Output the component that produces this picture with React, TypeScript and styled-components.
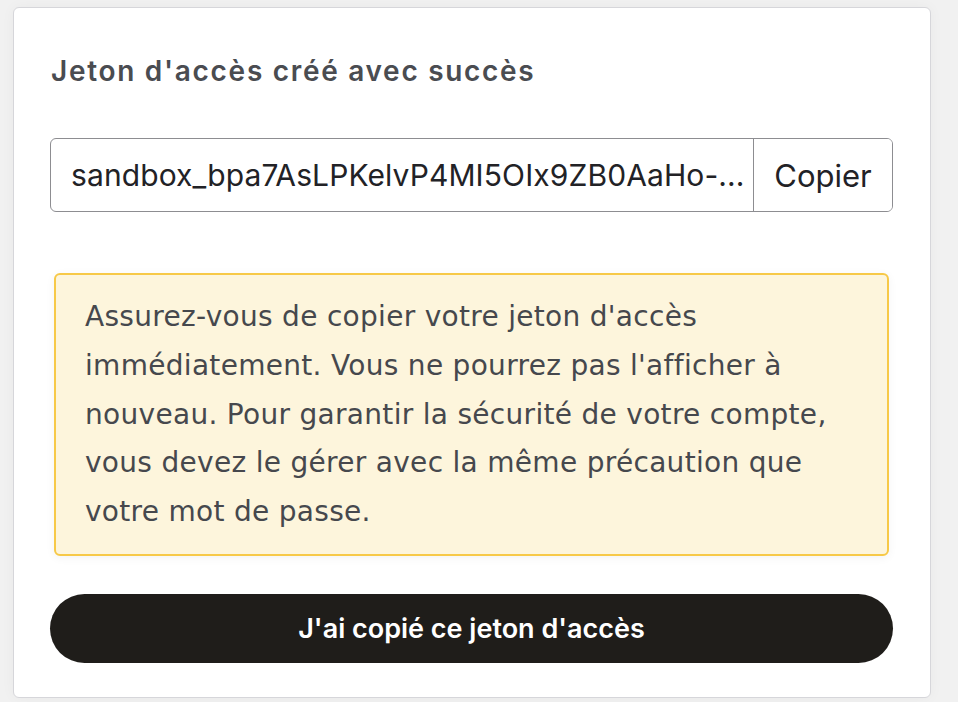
import React from "react";
import styled, { createGlobalStyle } from "styled-components";

const GlobalStyle = createGlobalStyle`
  html, body { margin: 0; padding: 0; background: #f1f1f1; }
  body { font-family: Inter, "Noto Sans", sans-serif; }
`;

const Page = styled.div`
  padding: 7px 27px 4px 13px;
  min-height: 702px;
  box-sizing: border-box;
`;

const Card = styled.div`
  box-sizing: border-box;
  width: 918px;
  height: 691px;
  background: #ffffff;
  border: 1px solid #d6d6da;
  border-radius: 6px;
  box-shadow: 0 0 14px rgba(0, 0, 0, 0.04);
  padding: 45px 37px 0 36px;
  display: flex;
  flex-direction: column;
`;

const Title = styled.h2`
  margin: 0 0 0 1px;
  font-family: Inter, sans-serif;
  font-weight: 600;
  font-size: 28px;
  line-height: 36px;
  color: #4a4c51;
  letter-spacing: 1.7px;
`;

const TokenGroup = styled.div`
  margin-top: 49px;
  display: flex;
  height: 74px;
  box-sizing: border-box;
  border: 1px solid #8d8d91;
  border-radius: 6px;
  overflow: hidden;
`;

const TokenInput = styled.div`
  flex: 1;
  min-width: 0;
  display: block;
  padding: 0 6px 0 20px;
  font-family: Inter, sans-serif;
  font-size: 30px;
  letter-spacing: 0.1px;
  color: #222226;
  white-space: nowrap;
  overflow: hidden;
  text-overflow: ellipsis;
  line-height: 72px;
`;

const CopyButton = styled.button`
  flex: 0 0 139px;
  border: none;
  border-left: 1px solid #8d8d91;
  background: #ffffff;
  font-family: Inter, sans-serif;
  font-size: 31px;
  color: #222226;
  padding: 0;
  cursor: pointer;
`;

const Warning = styled.div`
  margin: 61px 4px 0 4px;
  box-sizing: border-box;
  background: #fdf5dc;
  border: 2px solid #f7c948;
  border-radius: 6px;
  box-shadow: 0 2px 10px rgba(0, 0, 0, 0.05);
  padding: 18px 29px 17px 29px;
  font-family: "DejaVu Sans", sans-serif;
  font-size: 28px;
  line-height: 48.75px;
  color: #46484d;
  letter-spacing: 0.3px;
  white-space: nowrap;
`;

const ConfirmButton = styled.button`
  margin-top: 38px;
  height: 69px;
  border: none;
  border-radius: 35px;
  background: #1f1d1a;
  color: #ffffff;
  font-family: Inter, sans-serif;
  font-weight: 600;
  font-size: 27px;
  letter-spacing: 0px;
  cursor: pointer;
`;

export default function App() {
  return (
    <>
      <GlobalStyle />
      <Page>
        <Card>
          <Title>Jeton d'accès créé avec succès</Title>
          <TokenGroup>
            <TokenInput>sandbox_bpa7AsLPKelvP4MI5OIx9ZB0AaHo-...</TokenInput>
            <CopyButton>Copier</CopyButton>
          </TokenGroup>
          <Warning>
            Assurez-vous de copier votre jeton d'accès
            <br />
            immédiatement. Vous ne pourrez pas l'afficher à
            <br />
            nouveau. Pour garantir la sécurité de votre compte,
            <br />
            vous devez le gérer avec la même précaution que
            <br />
            votre mot de passe.
          </Warning>
          <ConfirmButton>J'ai copié ce jeton d'accès</ConfirmButton>
        </Card>
      </Page>
    </>
  );
}
